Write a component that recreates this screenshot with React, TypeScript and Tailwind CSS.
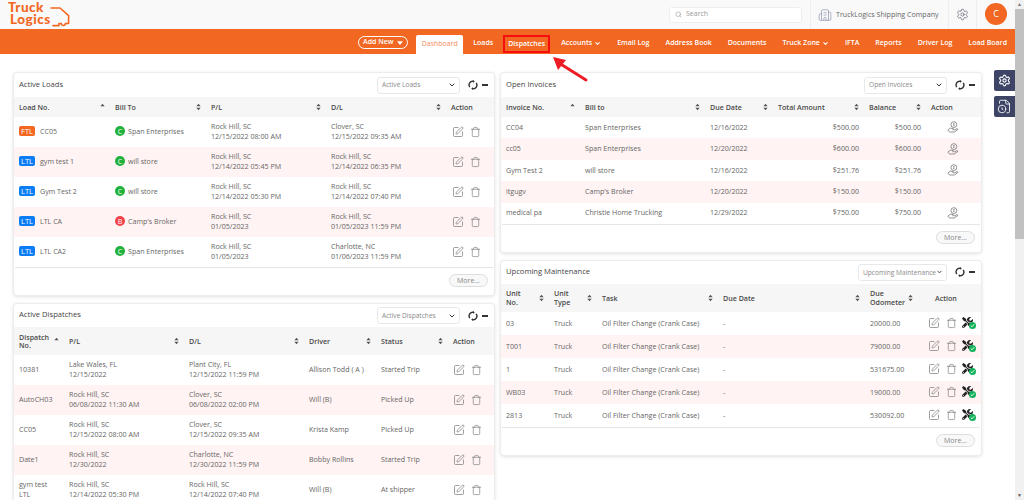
import { ChevronDown, Building2, FileClock, Search, Settings, SquarePen, Trash } from 'lucide-react';
import { FaTools } from 'react-icons/fa';
import type { ReactNode } from 'react';

const navItems = [
  { label: 'Loads' },
  { label: 'Dispatches', boxed: true },
  { label: 'Accounts', caret: true },
  { label: 'Email Log' },
  { label: 'Address Book' },
  { label: 'Documents' },
  { label: 'Truck Zone', caret: true },
  { label: 'IFTA' },
  { label: 'Reports' },
  { label: 'Driver Log' },
  { label: 'Load Board' },
];

const loads = [
  { type: 'FTL', no: 'CC05', kind: 'C', bill: 'Span Enterprises', pl: ['Rock Hill, SC', '12/15/2022 08:00 AM'], dl: ['Clover, SC', '12/15/2022 09:35 AM'] },
  { type: 'LTL', no: 'gym test 1', kind: 'C', bill: 'will store', pl: ['Rock Hill, SC', '12/14/2022 05:45 PM'], dl: ['Rock Hill, SC', '12/14/2022 06:35 PM'] },
  { type: 'LTL', no: 'Gym Test 2', kind: 'C', bill: 'will store', pl: ['Rock Hill, SC', '12/14/2022 05:30 PM'], dl: ['Rock Hill, SC', '12/14/2022 07:40 PM'] },
  { type: 'LTL', no: 'LTL CA', kind: 'B', bill: "Camp's Broker", pl: ['Rock Hill, SC', '01/05/2023'], dl: ['Rock Hill, SC', '01/05/2023 11:59 PM'] },
  { type: 'LTL', no: 'LTL CA2', kind: 'C', bill: 'Span Enterprises', pl: ['Rock Hill, SC', '01/05/2023'], dl: ['Charlotte, NC', '01/06/2023 11:59 PM'] },
];

const dispatches = [
  { no: ['10381'], pl: ['Lake Wales, FL', '12/15/2022'], dl: ['Plant City, FL', '12/15/2022 11:59 PM'], driver: 'Allison Todd ( A )', status: 'Started Trip' },
  { no: ['AutoCH03'], pl: ['Rock Hill, SC', '06/08/2022 11:30 AM'], dl: ['Clover, SC', '06/08/2022 02:00 PM'], driver: 'Will (B)', status: 'Picked Up' },
  { no: ['CC05'], pl: ['Rock Hill, SC', '12/15/2022 08:00 AM'], dl: ['Clover, SC', '12/15/2022 09:35 AM'], driver: 'Krista Kamp', status: 'Picked Up' },
  { no: ['Date1'], pl: ['Rock Hill, SC', '12/30/2022'], dl: ['Charlotte, NC', '12/30/2022 11:59 PM'], driver: 'Bobby Rollins', status: 'Started Trip' },
  { no: ['gym test', 'LTL'], pl: ['Rock Hill, SC', '12/14/2022 05:30 PM'], dl: ['Rock Hill, SC', '12/14/2022 07:40 PM'], driver: 'Will (B)', status: 'At shipper' },
];

const invoices = [
  { no: 'CC04', bill: 'Span Enterprises', due: '12/16/2022', total: '$500.00', balance: '$500.00', pay: true },
  { no: 'cc05', bill: 'Span Enterprises', due: '12/20/2022', total: '$600.00', balance: '$600.00', pay: true },
  { no: 'Gym Test 2', bill: 'will store', due: '12/16/2022', total: '$251.76', balance: '$251.76', pay: true },
  { no: 'itgugv', bill: "Camp's Broker", due: '12/20/2022', total: '$150.00', balance: '$150.00', pay: false },
  { no: 'medical pa', bill: 'Christie Home Trucking', due: '12/29/2022', total: '$750.00', balance: '$750.00', pay: true },
];

const maintenance = [
  { unit: '03', odo: '20000.00' },
  { unit: 'T001', odo: '79000.00' },
  { unit: '1', odo: '531675.00' },
  { unit: 'WB03', odo: '19000.00' },
  { unit: '2813', odo: '530092.00' },
];

const SortIcon = ({ up }: { up?: boolean }) => (
  <svg viewBox="0 0 6 9" className="w-[5px] h-[8px] shrink-0 text-[#555]" fill="currentColor">
    <path d="M3 0.5 5.6 3.6H0.4Z" />
    {!up && <path d="M3 8.5 0.4 5.4H5.6Z" />}
  </svg>
);

const RefreshIcon = () => (
  <svg viewBox="0 0 12 12" className="w-[10px] h-[10px]" fill="none" stroke="#333" strokeWidth="1.7">
    <path d="M2.2 8.6A4.5 4.5 0 0 1 6.6 1.5" />
    <path d="M9.8 3.4A4.5 4.5 0 0 1 5.4 10.5" />
    <path d="M6 0 8.2 1.7 6 3.2Z" fill="#333" stroke="none" />
    <path d="M6 12 3.8 10.3 6 8.8Z" fill="#333" stroke="none" />
  </svg>
);

// coin sitting on an open hand
const PayIcon = () => (
  <svg viewBox="0 0 14 14" className="w-[12px] h-[12px] ml-[21px] text-[#808080]" fill="none" stroke="currentColor" strokeWidth="1">
    <circle cx="8" cy="4.2" r="3.4" />
    <path d="M8 2.4V6M7 5.2H8.6M7.2 3.2H9" strokeWidth="0.7" />
    <path d="M1 10.6 3.8 8.4 7.4 8.8 6.8 10.2H9L12 8.8 12.8 9.8 8.6 12.8H5L3.2 13Z" />
  </svg>
);

const EditDelete = () => (
  <div className="flex items-center gap-[6px] text-[#7f7f7f]">
    <SquarePen className="w-[12px] h-[12px]" strokeWidth={1.5} />
    <Trash className="w-[11px] h-[12px]" strokeWidth={1.5} />
  </div>
);

const TwoLines = ({ lines }: { lines: string[] }) => (
  <div className="leading-[9.6px]">
    {lines.map((line) => (
      <div key={line}>{line}</div>
    ))}
  </div>
);

const Th = ({ children, up, nosort }: { children: ReactNode; up?: boolean; nosort?: boolean }) => (
  <th className="px-[5px] font-semibold text-left">
    <div className="flex items-center justify-between leading-[8.5px]">
      <span>{children}</span>
      {!nosort && <SortIcon up={up} />}
    </div>
  </th>
);

const Panel = ({ title, select, selectWidth, children, more, headerHeight = 'h-[24px]' }: {
  title: string;
  select: string;
  selectWidth: string;
  children: ReactNode;
  more?: boolean;
  headerHeight?: string;
}) => (
  <section className="bg-white rounded-[3px] ring-1 ring-[#ececec] shadow-[0_1px_4px_rgba(0,0,0,0.18)] overflow-hidden">
    <div className={`flex items-center pl-[5px] pr-[6px] ${headerHeight}`}>
      <h2 className="text-[7.6px] text-[#444] font-normal pb-[1px]">{title}</h2>
      <div className={`ml-auto flex items-center justify-between h-[17px] rounded-[3px] border border-[#e8e8e8] bg-white pl-[4px] pr-[3px] text-[6.6px] text-[#8a8a8a] whitespace-nowrap ${selectWidth}`}>
        <span>{select}</span>
        <ChevronDown className="w-[8px] h-[8px] text-[#333]" strokeWidth={3} />
      </div>
      <div className="ml-[8px] flex items-center gap-[3px]">
        <RefreshIcon />
        <span className="block w-[6px] h-[2px] bg-[#333] ml-[1px]" />
      </div>
    </div>
    {children}
    {more && (
      <div className="flex justify-end pr-[5px] pt-[6px] pb-[8px] border-t border-[#e6e6e6] mx-[1px]">
        <button className="h-[13px] w-[39px] rounded-full border border-[#ddd] bg-[#f8f8f8] text-[7px] leading-none text-[#888]">More...</button>
      </div>
    )}
  </section>
);

const ActiveLoads = () => (
  <Panel title="Active Loads" select="Active Loads" selectWidth="w-[83px]" more>
    <table className="w-full table-fixed border-collapse text-[7.1px] text-[#666] [&_td]:pb-[1px]">
      <colgroup>
        <col className="w-[96px]" />
        <col className="w-[96px]" />
        <col className="w-[120px]" />
        <col className="w-[120px]" />
        <col className="w-[48px]" />
      </colgroup>
      <thead className="bg-[#f6f6f6] text-[#4a4a4a]">
        <tr className="h-[20px]">
          <Th up>Load No.</Th>
          <Th>Bill To</Th>
          <Th>P/L</Th>
          <Th>D/L</Th>
          <Th nosort>Action</Th>
        </tr>
      </thead>
      <tbody>
        {loads.map((row, i) => (
          <tr key={row.no} className={`h-[30px] ${i % 2 ? 'bg-[#fff3f3]' : ''}`}>
            <td className="px-[5px]">
              <div className="flex items-center gap-[5px]">
                <span className={`w-[16px] text-center rounded-[2px] text-white text-[7.5px] leading-[10px] ${row.type === 'FTL' ? 'bg-[#f26722]' : 'bg-[#0a7cf5]'}`}>{row.type}</span>
                <span>{row.no}</span>
              </div>
            </td>
            <td className="px-[5px]">
              <div className="flex items-center gap-[3px]">
                <span className={`flex items-center justify-center w-[10px] h-[10px] rounded-full text-white text-[7px] leading-none ${row.kind === 'C' ? 'bg-[#20b13c]' : 'bg-[#f2434a]'}`}>{row.kind}</span>
                <span>{row.bill}</span>
              </div>
            </td>
            <td className="px-[5px]"><TwoLines lines={row.pl} /></td>
            <td className="px-[5px]"><TwoLines lines={row.dl} /></td>
            <td className="pl-[6px]"><EditDelete /></td>
          </tr>
        ))}
      </tbody>
    </table>
  </Panel>
);

const ActiveDispatches = () => (
  <Panel title="Active Dispatches" select="Active Dispatches" selectWidth="w-[83px]" headerHeight="h-[23px]">
    <table className="w-full table-fixed border-collapse text-[7.1px] text-[#666] [&_td]:pb-[1px]">
      <colgroup>
        <col className="w-[50px]" />
        <col className="w-[120px]" />
        <col className="w-[120px]" />
        <col className="w-[72px]" />
        <col className="w-[72px]" />
        <col className="w-[46px]" />
      </colgroup>
      <thead className="bg-[#f6f6f6] text-[#4a4a4a]">
        <tr className="h-[28px]">
          <Th up>Dispatch<br />No.</Th>
          <Th>P/L</Th>
          <Th>D/L</Th>
          <Th>Driver</Th>
          <Th>Status</Th>
          <Th nosort>Action</Th>
        </tr>
      </thead>
      <tbody>
        {dispatches.map((row, i) => (
          <tr key={row.no[0]} className={`h-[30px] ${i % 2 ? 'bg-[#fff3f3]' : ''}`}>
            <td className="px-[5px]"><TwoLines lines={row.no} /></td>
            <td className="px-[5px]"><TwoLines lines={row.pl} /></td>
            <td className="px-[5px]"><TwoLines lines={row.dl} /></td>
            <td className="px-[5px]">{row.driver}</td>
            <td className="px-[5px]">{row.status}</td>
            <td className="pl-[5px]"><EditDelete /></td>
          </tr>
        ))}
      </tbody>
    </table>
  </Panel>
);

const OpenInvoices = () => (
  <Panel title="Open Invoices" select="Open Invoices" selectWidth="w-[83px]" more>
    <table className="w-full table-fixed border-collapse text-[7.1px] text-[#666] [&_td]:pb-[1px]">
      <colgroup>
        <col className="w-[79px]" />
        <col className="w-[125px]" />
        <col className="w-[68px]" />
        <col className="w-[91px]" />
        <col className="w-[62px]" />
        <col className="w-[55px]" />
      </colgroup>
      <thead className="bg-[#f6f6f6] text-[#4a4a4a]">
        <tr className="h-[20px]">
          <Th up>Invoice No.</Th>
          <Th>Bill to</Th>
          <Th>Due Date</Th>
          <Th>Total Amount</Th>
          <Th>Balance</Th>
          <Th nosort>Action</Th>
        </tr>
      </thead>
      <tbody>
        {invoices.map((row, i) => (
          <tr key={row.no} className={`h-[21.4px] ${i % 2 ? 'bg-[#fff3f3]' : ''}`}>
            <td className="px-[5px]">{row.no}</td>
            <td className="px-[5px]">{row.bill}</td>
            <td className="px-[5px]">{row.due}</td>
            <td className="px-[5px] text-right">{row.total}</td>
            <td className="px-[5px] text-right">{row.balance}</td>
            <td>{row.pay && <PayIcon />}</td>
          </tr>
        ))}
      </tbody>
    </table>
  </Panel>
);

const UpcomingMaintenance = () => (
  <Panel title="Upcoming Maintenance" select="Upcoming Maintenance" selectWidth="w-[89px]" more headerHeight="h-[23px]">
    <table className="w-full table-fixed border-collapse text-[7.1px] text-[#666] [&_td]:pb-[1px]">
      <colgroup>
        <col className="w-[48px]" />
        <col className="w-[48px]" />
        <col className="w-[121px]" />
        <col className="w-[147px]" />
        <col className="w-[53px]" />
        <col className="w-[63px]" />
      </colgroup>
      <thead className="bg-[#f6f6f6] text-[#4a4a4a]">
        <tr className="h-[28px]">
          <Th>Unit<br />No.</Th>
          <Th>Unit<br />Type</Th>
          <Th>Task</Th>
          <Th>Due Date</Th>
          <Th>Due<br />Odometer</Th>
          <th className="pl-[17px] text-left font-semibold">Action</th>
        </tr>
      </thead>
      <tbody>
        {maintenance.map((row, i) => (
          <tr key={row.unit} className={`h-[23px] ${i % 2 ? 'bg-[#fff3f3]' : ''}`}>
            <td className="px-[5px]">{row.unit}</td>
            <td className="px-[5px]">Truck</td>
            <td className="px-[5px] whitespace-nowrap">Oil Filter Change (Crank Case)</td>
            <td className="px-[5px]">-</td>
            <td className="px-[5px]">{row.odo}</td>
            <td className="pl-[10px]">
              <div className="flex items-center gap-[5px]">
                <EditDelete />
                <span className="relative w-[14px] h-[12px]">
                  <FaTools className="w-[11px] h-[11px] text-[#222]" />
                  <span className="absolute right-0 bottom-0 flex items-center justify-center w-[7px] h-[7px] rounded-full bg-[#12b25b]">
                    <svg viewBox="0 0 8 8" className="w-[5px] h-[5px]" fill="none" stroke="white" strokeWidth="1.5">
                      <path d="M1.2 4.2 3.2 6 6.8 2" />
                    </svg>
                  </span>
                </span>
              </div>
            </td>
          </tr>
        ))}
      </tbody>
    </table>
  </Panel>
);

const Logo = () => (
  <div className="relative w-[62px] h-[26px] ml-[8px] mt-[1px] text-[#f26722] font-['Lato',sans-serif] font-black leading-[11.5px]">
    <div className="text-[13.5px] tracking-[0.5px]">Truck</div>
    <div className="text-[13.5px] ml-[2px] tracking-[0.5px]">Logics</div>
    <svg viewBox="0 0 20 20" className="absolute left-[42px] top-[5px] w-[20px] h-[20px]" fill="none" stroke="currentColor" strokeWidth="1.6" strokeLinejoin="round" strokeLinecap="round">
      <path d="M1 1H10L18.6 8.6V16.5H15.6" />
      <path d="M15.4 16.5A2 2 0 0 1 11.4 16.5H9V18.6H3" />
    </svg>
  </div>
);

export default function App() {
  return (
    <div className="flex w-[1024px] h-[500px] overflow-hidden bg-white font-['Open_Sans',sans-serif]">
      <main className="relative w-[1015px] h-full">
        <header className="flex items-center h-[29px] bg-[#f9f9f9]">
          <Logo />
          <div className="ml-auto flex items-center gap-[4px] w-[133px] h-[16px] px-[5px] bg-white border border-[#eeeeee] rounded-[3px] text-[7px] text-[#999]">
            <Search className="w-[7px] h-[7px]" />
            <span>Search</span>
          </div>
          <div className="ml-[8px] flex items-center gap-[4px] h-full px-[7px] border-x border-[#eeeeee] text-[7.1px] text-[#666]">
            <Building2 className="w-[14px] h-[14px] text-[#8b93ad]" strokeWidth={1.2} />
            <span className="w-[105px] whitespace-nowrap">TruckLogics Shipping Company</span>
          </div>
          <div className="flex items-center justify-center w-[28px] h-full border-r border-[#eeeeee]">
            <Settings className="w-[13px] h-[13px] text-[#667]" strokeWidth={1.4} />
          </div>
          <div className="flex items-center justify-center w-[22px] h-[22px] mx-[8px] -mt-[1px] rounded-full bg-[#f26722] text-white text-[9px]">C</div>
        </header>

        <nav className="flex items-end justify-end gap-[16px] h-[25px] pr-[8px] bg-[#f26722] text-white text-[7px] font-semibold">
          <button className="flex items-center justify-center gap-[4px] w-[50px] h-[13px] mb-[5px] -mr-[8px] rounded-full border border-white">
            Add New
            <svg viewBox="0 0 8 5" className="w-[6px] h-[4px]" fill="white"><path d="M0 0H8L4 5Z" /></svg>
          </button>
          <span className="flex items-center justify-center w-[47px] h-[19px] rounded-t-[2px] bg-white text-[#f58a5c] font-normal -mr-[6px]">Dashboard</span>
          {navItems.map((item) => (
            <span key={item.label} className={item.boxed ? 'flex items-center gap-[2px] h-[18px] px-[3px] mb-[1px] -ml-[6px] -mr-[5px] border-2 border-[#f50f0f]' : 'flex items-center gap-[2px] h-[19px] pb-[3px]'}>
              {item.label}
              {item.caret && <ChevronDown className="w-[7px] h-[7px]" strokeWidth={3.5} />}
            </span>
          ))}
        </nav>

        <div className="grid grid-cols-[480px_480px] gap-x-[7px] pl-[14px] pt-[19px] items-start">
          <div className="flex flex-col gap-[9px]">
            <ActiveLoads />
            <ActiveDispatches />
          </div>
          <div className="flex flex-col gap-[9px]">
            <OpenInvoices />
            <UpcomingMaintenance />
          </div>
        </div>

        {/* callout arrow from the annotated screenshot */}
        <svg viewBox="0 0 40 28" className="absolute left-[550px] top-[56px] w-[40px] h-[28px]">
          <path d="M36 24 9 7" stroke="#ee1c25" strokeWidth="3" strokeLinecap="round" />
          <path d="M3 1 16 4 8 14Z" fill="#ee1c25" />
        </svg>

        <div className="absolute right-0 top-[70px] flex flex-col gap-[5px] text-white">
          <div className="flex items-center justify-center w-[21px] h-[21px] rounded-l-[2px] bg-[#3d4465]">
            <Settings className="w-[13px] h-[13px]" strokeWidth={2} />
          </div>
          <div className="flex items-center justify-center w-[21px] h-[21px] rounded-l-[2px] bg-[#3d4465]">
            <FileClock className="w-[15px] h-[15px]" strokeWidth={1.4} />
          </div>
        </div>
      </main>

      <div className="flex flex-col w-[9px] h-full bg-[#f1f1f1]">
        <div className="h-[9px] text-[#777] text-[5px] leading-[9px] text-center">▲</div>
        <div className="h-[230px] bg-[#c1c1c1]" />
        <div className="mt-auto h-[9px] text-[#555] text-[5px] leading-[9px] text-center">▼</div>
      </div>
    </div>
  );
}
